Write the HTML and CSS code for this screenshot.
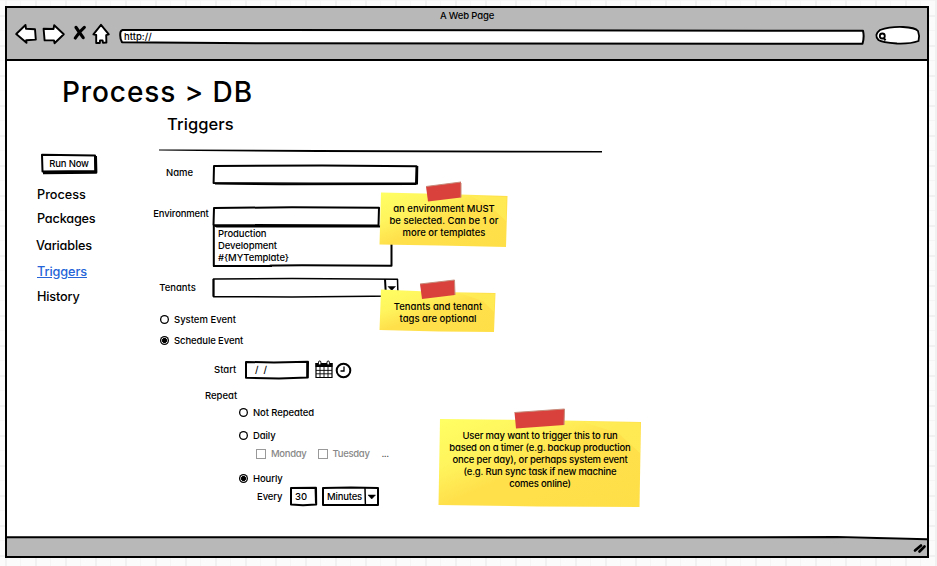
FILE: index.html
```html
<!DOCTYPE html>
<html lang="en">
<head>
<meta charset="utf-8">
<title>A Web Page</title>
<link rel="stylesheet" href="styles.css">
</head>
<body>
<div class="window">
  <header class="chrome">
    <div class="chrome-title">A Web Page</div>
    <div class="toolbar">
      <svg class="nav-icons" width="112" height="28" viewBox="8 20 112 28">
        <g fill="#fff" stroke="#000" stroke-width="1.9" stroke-linejoin="round" stroke-linecap="round">
          <path d="M16.2 33 L25.5 24 L26 27.8 L35 28.2 L35.8 38.6 L26.2 39.2 L26.5 41.8 Z"/>
          <path d="M43.6 27.8 L53.5 28 L54.2 24.2 L63.8 33.2 L54.5 42.2 L54 39.4 L44.6 39.4 Z"/>
          <path d="M101 23.8 L93.4 33.4 L96.2 34 L96.2 42 L99.8 42 L100 39.4 L102.6 39.4 L103 41.8 L106.4 41.6 L106.2 34.2 L108.8 33.4 Z"/>
        </g>
        <path d="M76 26.4 Q79 31 83.2 36.6 M84.3 26.4 Q79 31 75.3 37" fill="none" stroke="#000" stroke-width="3.2" stroke-linecap="round"/>
      </svg>
      <div class="sketch url">
        <svg width="746" height="18"><path d="M1.5 3 Q2 1.5 4 .8 L160 1 L744 1.8 Q745.5 8 743.5 14.8 L160 14.3 L3 13.3 Q0.5 9 1.5 3Z"/></svg>
        <span class="url-text">http://</span>
      </div>
      <svg class="search" width="48" height="22" viewBox="874 25 48 22">
        <path d="M880 31 Q890 27.5 903 28 Q915 28.5 918 32 Q920 37 918.5 42 Q910 45 897 44.5 Q882 43.5 878.5 41 Q873.5 36 880 31Z" fill="#fff" stroke="#000" stroke-width="1.8"/>
        <circle cx="882.3" cy="37" r="2.5" fill="#fff" stroke="#000" stroke-width="1.8"/>
        <path d="M884 39.3 L885.5 41.3" stroke="#000" stroke-width="2"/>
      </svg>
    </div>
  </header>

  <div class="content">
    <h1>Process &gt; DB</h1>
    <div class="columns">
      <nav class="side">
        <button class="sketch run">
          <svg width="58" height="22"><path d="M2 1.8 L55 2.6 L55.6 18 L2.5 18.5Z"/><path class="shadow" d="M55.5 3 L55.9 19.3 L3 19.8"/></svg>
          <span>Run Now</span>
        </button>
        <a class="s1">Process</a>
        <a class="s2">Packages</a>
        <a class="s3">Variables</a>
        <a class="s4 active">Triggers</a>
        <a class="s5">History</a>
      </nav>
      <main class="form">
        <h2>Triggers</h2>
        <svg class="rule" width="444" height="5"><path d="M0 .6 L20 0.4 L443 2 L443 3.6 L160 3 L40 2 L0 1.6 Z"/></svg>

        <div class="row name-row">
          <label class="label l-name">Name</label>
          <div class="sketch"><svg width="207" height="22"><path d="M2 2 L110 1.6 L204.5 2.2 L204 19.6 L100 19.4 L1.6 19Z"/><path d="M205.3 2 L205 20.5 M3 19.6 L70 20.3 L204 20"/></svg></div>
        </div>

        <div class="row env-row">
          <label class="label l-env">Environment</label>
          <div class="combo">
            <div class="sketch"><svg width="181" height="20"><path d="M2 2 L80 1.3 L167 1.8 L166.5 19.5 L1.5 19Z"/></svg></div>
            <div class="sketch list">
              <svg width="181" height="43"><path d="M2 1.5 L179.5 1.5 L179.5 40.8 L90 40.2 L2 41Z"/><path d="M1.8 1 L1.8 41 L60 41"/></svg>
              <ul><li>Production</li><li>Development</li><li>#{MYTemplate}</li></ul>
            </div>
          </div>
        </div>

        <div class="row tenant-row">
          <label class="label l-ten">Tenants</label>
          <div class="sketch"><svg width="188" height="22"><path class="thin" d="M1.5 2 L80 1.6 L185.5 2.3 L186 19 L80 20 L1.5 19.7Z"/><path d="M173 2 L174 20 M1.5 2 V19.5"/><path d="M176 9.5 H183.5 L179.7 13.5Z" class="solid"/></svg></div>
        </div>

        <div class="row radio-row system"><i class="radio"></i><span>System Event</span></div>
        <div class="row radio-row schedule"><i class="radio on"></i><span>Schedule Event</span></div>

        <div class="row start-row">
          <label class="label l-start">Start</label>
          <div class="sketch date"><svg width="66" height="20"><path d="M2 2 L30 2.4 L64 1.8 L63.8 17.6 L35 18.4 L2 17.8Z"/><path d="M63.2 3 V18"/></svg><span>/&nbsp;&nbsp;/</span></div>
          <svg class="calendar" width="18" height="20" viewBox="0 0 18 20">
            <path d="M1 3.5 H17 V17.5 H1Z" fill="#fff" stroke="#000" stroke-width="1.2"/>
            <path d="M.5 3 H17.5 V7 H.5Z"/>
            <path d="M1 10.4 H17 M1 13.8 H17 M5 6 V17.5 M9 6 V17.5 M13 6 V17.5" stroke="#000" stroke-width=".9"/>
            <rect x="3.5" y="1" width="2.4" height="4" rx="1.2" fill="#fff" stroke="#000"/><rect x="12" y="1" width="2.4" height="4" rx="1.2" fill="#fff" stroke="#000"/>
          </svg>
          <svg class="clock" width="17" height="17" viewBox="0 0 17 17"><circle cx="8.5" cy="8.5" r="6.8" fill="#fff" stroke="#000" stroke-width="2"/><path d="M9 4.5 V9 H5.5" fill="none" stroke="#000" stroke-width="1.3"/></svg>
        </div>

        <div class="row repeat-row"><span>Repeat</span></div>
        <div class="row option not-repeated"><i class="radio"></i><span>Not Repeated</span></div>
        <div class="row option daily"><i class="radio"></i><span>Daily</span></div>
        <div class="row days"><i class="check"></i><span>Monday</span><i class="check second"></i><span>Tuesday</span><span class="dots">...</span></div>
        <div class="row option hourly"><i class="radio on"></i><span>Hourly</span></div>
        <div class="row every-row">
          <span class="t-every">Every</span>
          <div class="sketch number"><svg width="29" height="21"><path d="M2 2 L27 1.8 L27.2 18.6 L14 19.2 L2 18.6Z"/><path d="M26.6 3 L27 17"/></svg><span>30</span></div>
          <div class="sketch unit"><svg width="59" height="21"><path d="M2 2 L30 1.6 L57 2 L57 19 L2 19Z"/><path class="thin" d="M44 2 L44.4 19"/><path class="solid" d="M47 9 H54.5 L50.7 13Z"/></svg><span>Minutes</span></div>
        </div>
      </main>
    </div>
  </div>

  <footer class="status">
    <svg width="922" height="22" viewBox="0 0 922 22"><path d="M0 2 L500 2 L800 1.5 L922 4 V22 H0Z" fill="#b8b8b8"/><path d="M0 1.2 L500 1.5 L830 1.1 L922 3.4" fill="none" stroke="#000" stroke-width="2"/><path d="M908 14.5 L914 9.5 M912.5 15.5 L917.5 10.5" stroke="#000" stroke-width="2.7" stroke-linecap="round"/></svg>
  </footer>
</div>

<svg class="defs" width="0" height="0"><defs>
  <linearGradient id="paper" x1="0" y1="0" x2="1" y2="1"><stop offset="0" stop-color="#ffff63"/><stop offset=".28" stop-color="#fff45d"/><stop offset=".5" stop-color="#ffe04b"/><stop offset="1" stop-color="#ffdf48"/></linearGradient>
</defs></svg>

<aside class="note note-env">
  <svg width="130" height="68"><path d="M2 11.5 L66 13 L128.5 15 L127 66 L60 64.5 L.5 63.5Z" fill="url(#paper)"/><path d="M92 15 L127.5 16 L127 40 L112 26Z" fill="#fff05a" opacity=".6"/><path d="M47 5.5 L82 1 L82 16.5 L49 20.5Z" fill="#d9423c"/><path d="M47 5.5 L82 1 M82 2 V16.5" fill="none" stroke="#c78b7b" stroke-width="1"/></svg>
  <p>an environment MUST<br>be selected. Can be 1 or<br>more or templates</p>
</aside>
<aside class="note note-tenant">
  <svg width="118" height="54"><path d="M2 10.5 L60 13 L116.5 14 L115 53 L60 52.5 L.5 51Z" fill="url(#paper)"/><path d="M80 14 L116 15 L115 33 L104 22Z" fill="#fff05a" opacity=".6"/><path d="M41 5 L75.5 1 L76 16 L43 20Z" fill="#d9423c"/><path d="M41 5 L75.5 1 L76 16" fill="none" stroke="#c78b7b" stroke-width="1"/></svg>
  <p>Tenants and tenant<br>tags are optional</p>
</aside>
<aside class="note note-schedule">
  <svg width="204" height="102"><path d="M2 11 L100 12 L203 14 L201.5 99 L100 98.5 L.5 97Z" fill="url(#paper)"/><path d="M145 14 L202 14.5 L202 45 L180 25Z" fill="#fff05a" opacity=".6"/><path d="M76.5 4.5 L126.5 1 L126 17 L78 20.5Z" fill="#d9423c"/><path d="M76.5 4.5 L126.5 1 L126 17" fill="none" stroke="#c78b7b" stroke-width="1"/></svg>
  <p>User may want to trigger this to run<br>based on a timer (e.g. backup production<br>once per day), or perhaps system event<br>(e.g. Run sync task if new machine<br>comes online)</p>
</aside>
</body>
</html>
```
FILE: styles.css
```css
* { box-sizing: border-box; }
body {
  margin: 0;
  width: 937px;
  height: 566px;
  overflow: hidden;
  position: relative;
  padding: 6px 0 0 5px;
  background-color: #fbfbfb;
  background-image:
    linear-gradient(90deg, #f1f1f1 2px, transparent 2px),
    linear-gradient(#f1f1f1 2px, transparent 2px),
    linear-gradient(90deg, #f5f5f5 1px, transparent 1px),
    linear-gradient(#f5f5f5 1px, transparent 1px);
  background-size: 30px 30px, 30px 30px, 15px 15px, 15px 15px;
  background-position: 5px 0, 0 15px, 5px 0, 0 0;
  font: 500 9.5px/12px Inter, "Open Sans", sans-serif;
  font-feature-settings: "cv11" 1;
  color: #000;
}
svg { display: block; flex: none; }
h1, h2, p, ul { margin: 0; padding: 0; font-weight: 450; }
.window {
  width: 924px;
  height: 552px;
  border: 2px solid #000;
  background: #fff;
  display: flex;
  flex-direction: column;
}
.chrome { height: 53px; background: #b8b8b8; border-bottom: 2px solid #000; flex: none; }
.chrome-title { height: 12px; margin-top: 2px; text-align: center; letter-spacing: -.15px; }
.toolbar { display: flex; height: 28px; padding-left: 1px; }
.nav-icons { margin: -1px -1px 0 0; }
.url { margin-top: 7px; height: 18px; }
.url-text { padding: 2px 0 0 5px; }
.search { margin: 2px 0 0 9px; }
.sketch { display: grid; flex: none; }
.sketch > * { grid-area: 1 / 1; }
.sketch path { fill: #fff; stroke: #000; stroke-width: 2; stroke-linejoin: round; }
.sketch path.thin { stroke-width: 1.5; }
.sketch path.solid { fill: #000; stroke-width: .5; }
.sketch path.shadow { fill: none; stroke-width: 3; }

.content { flex: 1; min-height: 0; }
h1 { height: 40px; padding: 11px 0 0 55px; font-size: 28px; line-height: 40px; letter-spacing: .9px; white-space: nowrap; }
.columns { display: flex; padding-top: 13px; }
.side { width: 139px; flex: none; display: flex; flex-direction: column; align-items: flex-start; padding: 39px 0 0 29px; font-size: 12.7px; line-height: 16px; }
.run { margin: 0 0 0 4px; padding: 0; border: 0; background: none; font: inherit; font-size: 9.5px; line-height: 12px; letter-spacing: -.15px; height: 22px; color: #000; }
.run span { padding: 5px 0 0; }
.side a { white-space: nowrap; }
.s1 { margin: 12px 0 0 1px; }
.s2 { margin: 8px 0 0 1px; }
.side .s2, .side .s3 { letter-spacing: -.2px; }
.s3 { margin-top: 11px; }
.s4 { margin: 10px 0 0 1px; letter-spacing: -.1px; }
.s5 { margin: 9px 0 0 1px; letter-spacing: -.15px; }
.active { color: #2463d8; text-decoration: underline; }

.form { flex: 1; }
h2 { height: 20px; padding-left: 21px; font-size: 16.5px; line-height: 20px; letter-spacing: .1px; }
.rule { margin: 15px 0 0 13px; }
.row { display: flex; white-space: nowrap; }
.label { width: 66px; text-align: center; flex: none; }
.name-row { margin-top: 10px; }
.l-name { padding: 3px 0 0 1px; }
.env-row { margin-top: 20px; }
.l-env { padding: 2px 0 0 4px; letter-spacing: -.15px; }
.list { margin-top: -1px; }
.list ul { list-style: none; padding: 3px 0 0 6px; font-weight: 500; letter-spacing: -.1px; }
.tenant-row { margin-top: 9px; }
.l-ten { padding: 5px 3px 0 0; }
.radio { width: 9px; height: 9px; margin: 1px 5px 0 0; box-shadow: inset 0 0 0 1.3px #000; border-radius: 50%; background: #fff; flex: none; }
.radio.on { background: radial-gradient(circle, #000 0 2.2px, #fff 2.9px); }
.radio-row { padding-left: 14px; height: 12px; }
.system { margin-top: 15px; }
.schedule { margin-top: 9px; letter-spacing: -.1px; }
.start-row { margin-top: 13px; height: 20px; }
.l-start { width: 98px; padding: 4px 0 0 68px; text-align: left; }
.date span { padding: 4px 0 0 11px; }
.calendar { margin: 0 2px 0 5px; }
.clock { margin-top: 2px; }
.repeat-row { margin-top: 10px; height: 12px; padding-left: 59px; }
.option { height: 12px; padding-left: 93px; letter-spacing: -.1px; }
.not-repeated { margin-top: 5px; }
.daily { margin-top: 11px; }
.days { margin-top: 6px; height: 12px; padding-left: 110px; color: #888; letter-spacing: -.3px; }
.check { width: 10px; height: 10px; margin: 1px 5px 0 0; border: 1px solid #999; flex: none; }
.second { margin-left: 11px; }
.dots { margin-left: 12px; color: #333; letter-spacing: -.6px; }
.hourly { margin-top: 13px; }
.every-row { margin-top: 1px; }
.t-every { width: 143px; padding: 5px 0 0 111px; letter-spacing: -.1px; }
.number span { padding: 5px 0 0 6px; }
.unit { margin-left: 3px; }
.unit span { padding: 5px 0 0 6px; letter-spacing: -.2px; }
.status { height: 20px; flex: none; overflow: hidden; }

.defs { position: absolute; }
.note { position: absolute; display: grid; }
.note > * { grid-area: 1 / 1; }
.note p { text-align: center; font-weight: 500; white-space: nowrap; }
.note-env { left: 379px; top: 181px; }
.note-env p { padding-top: 22px; }
.note-tenant { left: 379px; top: 279px; }
.note-tenant p { padding-top: 22px; }
.note-schedule { left: 438px; top: 408px; }
.note-schedule p { padding-top: 22px; letter-spacing: -.17px; }
```
